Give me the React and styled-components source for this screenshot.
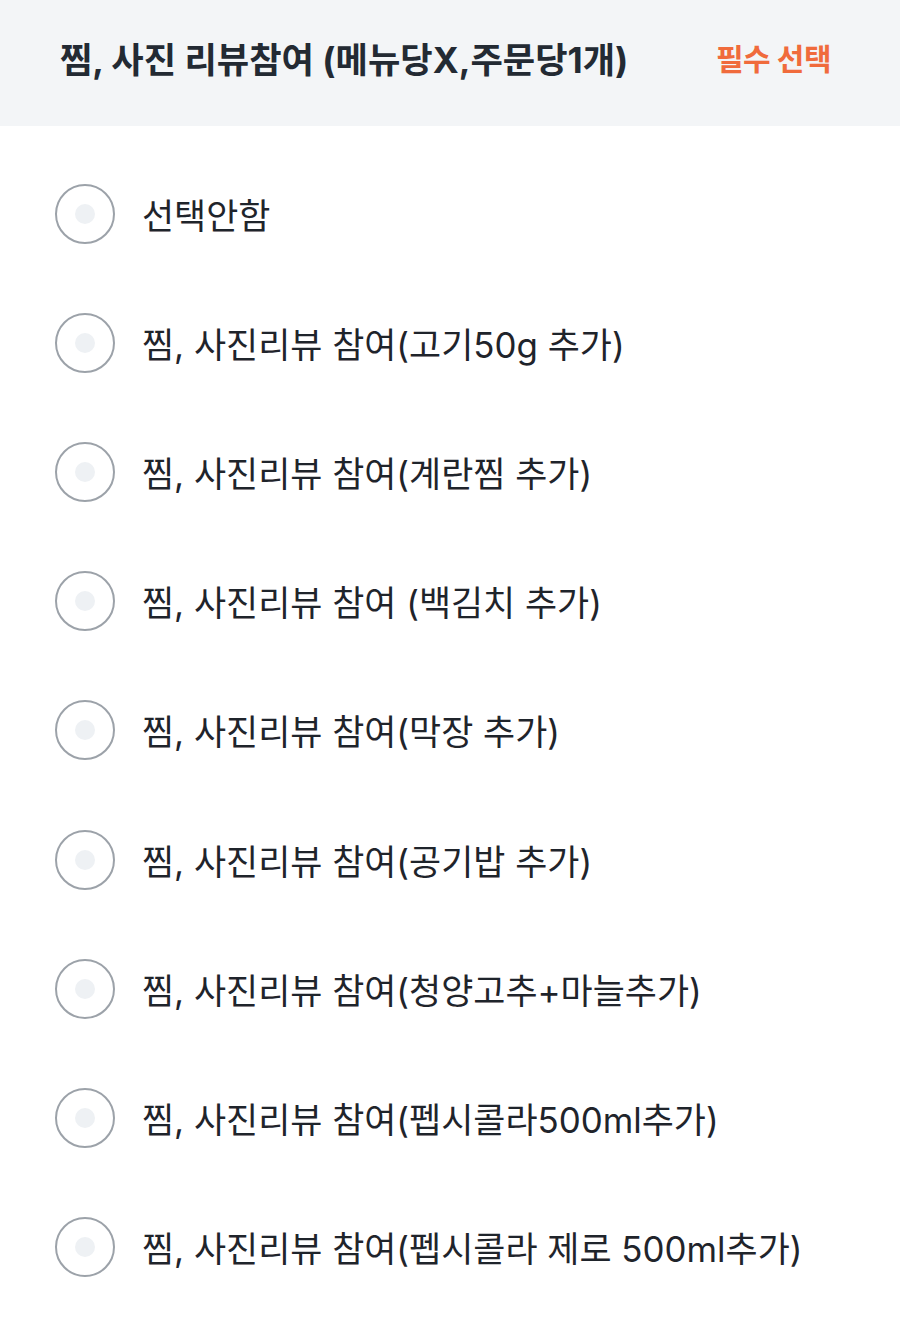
import React from "react";
import styled, { createGlobalStyle } from "styled-components";

const Global = createGlobalStyle`
  html, body { margin: 0; padding: 0; background: #ffffff; }
  body { font-family: Inter, "Noto Sans CJK KR", sans-serif; -webkit-font-smoothing: antialiased; }
`;

const Page = styled.div`
  width: 900px;
  min-height: 1335px;
  background: #ffffff;
`;

const Header = styled.header`
  height: 126px;
  background: #f3f5f7;
  display: flex;
  align-items: center;
  justify-content: space-between;
  padding: 0 69px 12px 60px;
  box-sizing: border-box;
`;

const Title = styled.h2`
  margin: 0;
  font-family: Inter, "Noto Sans CJK KR", sans-serif;
  font-size: 35.2px;
  font-weight: 700;
  color: #232a33;
  letter-spacing: 0;
`;

const Badge = styled.span`
  font-family: Inter, "Noto Sans CJK KR", sans-serif;
  font-size: 30px;
  font-weight: 700;
  color: #f06b3c;
  letter-spacing: -0.5px;
`;

const List = styled.div`
  display: flex;
  flex-direction: column;
  padding-top: 23px;
`;

const Row = styled.label`
  height: 129.2px;
  display: flex;
  align-items: center;
  padding-left: 55px;
  gap: 27px;
  cursor: pointer;
`;

const Radio = styled.span`
  width: 60px;
  height: 60px;
  box-sizing: border-box;
  border-radius: 50%;
  border: 2.5px solid #9ca2a9;
  display: flex;
  align-items: center;
  justify-content: center;
  flex-shrink: 0;
  &::after {
    content: "";
    width: 20px;
    height: 20px;
    border-radius: 50%;
    background: #eef1f4;
  }
`;

const Label = styled.span`
  font-family: Inter, "Noto Sans CJK KR", sans-serif;
  font-size: 34.9px;
  font-weight: 400;
  color: #1f242b;
  letter-spacing: 0;
`;

const options = [
  "선택안함",
  "찜, 사진리뷰 참여(고기50g 추가)",
  "찜, 사진리뷰 참여(계란찜 추가)",
  "찜, 사진리뷰 참여 (백김치 추가)",
  "찜, 사진리뷰 참여(막장 추가)",
  "찜, 사진리뷰 참여(공기밥 추가)",
  "찜, 사진리뷰 참여(청양고추+마늘추가)",
  "찜, 사진리뷰 참여(펩시콜라500ml추가)",
  "찜, 사진리뷰 참여(펩시콜라 제로 500ml추가)",
];

export default function App() {
  return (
    <Page>
      <Global />
      <Header>
        <Title>찜, 사진 리뷰참여 (메뉴당X,주문당1개)</Title>
        <Badge>필수 선택</Badge>
      </Header>
      <List>
        {options.map((o) => (
          <Row key={o}>
            <Radio />
            <Label>{o}</Label>
          </Row>
        ))}
      </List>
    </Page>
  );
}
